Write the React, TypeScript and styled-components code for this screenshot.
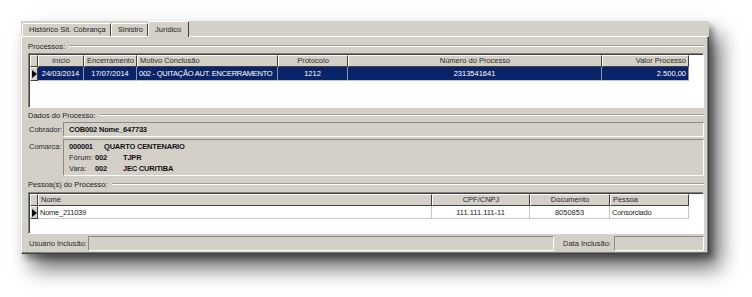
import React from 'react'
import styled, { createGlobalStyle } from 'styled-components'

const GlobalStyle = createGlobalStyle`
  html, body {
    margin: 0;
    background: #fff;
  }
  body {
    font-family: 'Liberation Sans', Arial, sans-serif;
    font-size: 7.5px;
    color: #1c1c1c;
  }
`

const Stage = styled.div`
  box-sizing: border-box;
  width: 752px;
  height: 297px;
  padding: 21px 0 0 21px;
  background: #fff;
  overflow: hidden;
`

const Window = styled.div`
  width: 688px;
  height: 233px;
  background: #d4d0c8;
  box-shadow: 4px 5px 6px rgba(0, 0, 0, 0.35), 11px 14px 20px rgba(0, 0, 0, 0.6);
  display: flex;
  flex-direction: column;
`

const TabStrip = styled.div`
  display: flex;
  align-items: flex-end;
  height: 15px;
  padding-left: 1px;
  flex-shrink: 0;
`

const Tab = styled.div<{ $w: number; $active?: boolean }>`
  box-sizing: border-box;
  width: ${({ $w }) => $w}px;
  height: ${({ $active }) => ($active ? 16 : 13)}px;
  margin-bottom: ${({ $active }) => ($active ? -1 : 0)}px;
  padding: ${({ $active }) => ($active ? '2px 0 0 6px' : '0 0 0 6px')};
  border-left: 1px solid #fff;
  border-top: 1px solid #fff;
  border-right: 1px solid #404040;
  border-radius: 2px 2px 0 0;
  background: #d4d0c8;
  line-height: 11px;
  white-space: nowrap;
  position: relative;
  z-index: 1;
`

const Page = styled.div`
  flex: 1;
  box-sizing: border-box;
  border-top: 1px solid #fff;
  border-left: 1px solid #fff;
  border-right: 1px solid #404040;
  border-bottom: 1px solid #404040;
  box-shadow: inset -1px -1px #808080;
  padding: 2px 4px 0 6px;
  display: flex;
  flex-direction: column;
`

const GroupTitle = styled.div<{ $h: number }>`
  height: ${({ $h }) => $h}px;
  display: flex;
  align-items: center;
  gap: 4px;
  flex-shrink: 0;

  &::after {
    content: '';
    flex: 1;
    border-top: 1px solid #a09c94;
    border-bottom: 1px solid #fff;
  }
`

const Grid = styled.div<{ $h: number }>`
  box-sizing: border-box;
  height: ${({ $h }) => $h}px;
  flex-shrink: 0;
  background: #fff;
  border: 1px solid;
  border-color: #808080 #fff #fff #808080;
  box-shadow: inset 1px 1px #404040;
  padding: 1px 0 0 1px;
`

const Row = styled.div<{ $h: number }>`
  display: flex;
  height: ${({ $h }) => $h}px;
`

const HeadCell = styled.div<{ $w: number; $align?: string }>`
  box-sizing: border-box;
  width: ${({ $w }) => $w}px;
  background: #d4d0c8;
  border-left: 1px solid #fff;
  border-top: 1px solid #fff;
  border-right: 1px solid #404040;
  border-bottom: 1px solid #404040;
  padding: 0 2px;
  text-align: ${({ $align }) => $align || 'center'};
  line-height: 10px;
  white-space: nowrap;
  overflow: hidden;
  color: #2a2a2a;
`

const Indicator = styled(HeadCell)`
  display: flex;
  align-items: center;
  padding: 0 0 0 1px;
`

const DataCell = styled.div<{ $w: number; $align?: string; $selected?: boolean }>`
  box-sizing: border-box;
  width: ${({ $w }) => $w}px;
  background: ${({ $selected }) => ($selected ? '#0a246a' : '#fff')};
  color: ${({ $selected }) => ($selected ? '#fff' : '#1c1c1c')};
  border-right: 1px solid ${({ $selected }) => ($selected ? '#8a93b4' : '#c8c8c8')};
  border-bottom: 1px solid #c8c8c8;
  padding: 0 2px;
  text-align: ${({ $align }) => $align || 'left'};
  line-height: 13px;
  white-space: nowrap;
  overflow: hidden;
  letter-spacing: ${({ $align }) => ($align === 'left' ? '-0.25px' : '0')};
`

const FieldRow = styled.div<{ $h: number; $mt?: number }>`
  display: flex;
  align-items: flex-start;
  height: ${({ $h }) => $h}px;
  margin-top: ${({ $mt }) => $mt || 0}px;
  flex-shrink: 0;
`

const Label = styled.div<{ $w: number; $ml?: number }>`
  width: ${({ $w }) => $w}px;
  margin-left: ${({ $ml }) => $ml || 0}px;
  padding-left: 1px;
  box-sizing: border-box;
  line-height: 15px;
  white-space: nowrap;
  color: #2a2a2a;
`

const FieldBox = styled.div<{ $w?: number }>`
  box-sizing: border-box;
  ${({ $w }) => ($w ? `width: ${$w}px;` : 'flex: 1;')}
  height: 100%;
  border: 1px solid;
  border-color: #8c8a84 #fff #fff #8c8a84;
  padding: 1px 5px;
  display: flex;
  flex-direction: column;
`

const Line = styled.div<{ $lh?: number }>`
  display: flex;
  line-height: ${({ $lh }) => $lh || 11}px;
  white-space: nowrap;
`

const Part = styled.span<{ $w?: number; $bold?: boolean }>`
  ${({ $w }) => ($w ? `width: ${$w}px;` : '')}
  flex-shrink: 0;
  font-weight: ${({ $bold }) => ($bold ? 700 : 400)};
  letter-spacing: ${({ $bold }) => ($bold ? '-0.2px' : '0')};
  color: ${({ $bold }) => ($bold ? '#111' : '#2a2a2a')};
`

const Arrow = () => (
  <svg width="5" height="8" viewBox="0 0 5 8">
    <polygon points="0,0 5,4 0,8" fill="#000" />
  </svg>
)

const procCols = [
  { title: 'Início', w: 46, align: 'center', value: '24/03/2014' },
  { title: 'Encerramento', w: 53, align: 'center', value: '17/07/2014' },
  { title: 'Motivo Conclusão', w: 141, align: 'left', value: '002 - QUITAÇÃO AUT. ENCERRAMENTO' },
  { title: 'Protocolo', w: 70, align: 'center', value: '1212' },
  { title: 'Número do Processo', w: 254, align: 'center', value: '2313541641' },
  { title: 'Valor Processo', w: 87, align: 'right', value: '2.500,00' },
]

const pessoaCols = [
  { title: 'Nome', w: 394, head: 'left', align: 'left', value: 'Nome_211039' },
  { title: 'CPF/CNPJ', w: 98, head: 'center', align: 'center', value: '111.111.111-11' },
  { title: 'Documento', w: 80, head: 'center', align: 'center', value: '8050853' },
  { title: 'Pessoa', w: 79, head: 'left', align: 'left', value: 'Consorciado' },
]

export default function App() {
  return (
    <>
      <GlobalStyle />
      <Stage>
        <Window>
          <TabStrip>
            <Tab $w={89}>Histórico Sit. Cobrança</Tab>
            <Tab $w={37}>Sinistro</Tab>
            <Tab $w={41} $active>
              Jurídico
            </Tab>
          </TabStrip>
          <Page>
            <GroupTitle $h={14}>Processos:</GroupTitle>
            <Grid $h={55}>
              <Row $h={12}>
                <HeadCell $w={8} />
                {procCols.map((c) => (
                  <HeadCell key={c.title} $w={c.w} $align={c.align}>
                    {c.title}
                  </HeadCell>
                ))}
              </Row>
              <Row $h={14}>
                <Indicator $w={8}>
                  <Arrow />
                </Indicator>
                {procCols.map((c) => (
                  <DataCell key={c.title} $w={c.w} $align={c.align} $selected>
                    {c.value}
                  </DataCell>
                ))}
              </Row>
            </Grid>

            <GroupTitle $h={14}>Dados do Processo:</GroupTitle>
            <FieldRow $h={15}>
              <Label $w={35}>Cobrador:</Label>
              <FieldBox>
                <Line $lh={12}>
                  <Part $w={30} $bold>
                    COB002
                  </Part>
                  <Part $bold>Nome_647733</Part>
                </Line>
              </FieldBox>
            </FieldRow>
            <FieldRow $h={37} $mt={2}>
              <Label $w={35}>Comarca:</Label>
              <FieldBox>
                <Line>
                  <Part $w={35} $bold>
                    000001
                  </Part>
                  <Part $bold>QUARTO CENTENARIO</Part>
                </Line>
                <Line>
                  <Part $w={26}>Fórum:</Part>
                  <Part $w={28} $bold>
                    002
                  </Part>
                  <Part $bold>TJPR</Part>
                </Line>
                <Line>
                  <Part $w={26}>Vara:</Part>
                  <Part $w={28} $bold>
                    002
                  </Part>
                  <Part $bold>JEC CURITIBA</Part>
                </Line>
              </FieldBox>
            </FieldRow>

            <GroupTitle $h={16}>Pessoa(s) do Processo:</GroupTitle>
            <Grid $h={42}>
              <Row $h={12}>
                <HeadCell $w={8} />
                {pessoaCols.map((c) => (
                  <HeadCell key={c.title} $w={c.w} $align={c.head}>
                    {c.title}
                  </HeadCell>
                ))}
              </Row>
              <Row $h={13}>
                <Indicator $w={8}>
                  <Arrow />
                </Indicator>
                {pessoaCols.map((c) => (
                  <DataCell key={c.title} $w={c.w} $align={c.align}>
                    {c.value}
                  </DataCell>
                ))}
              </Row>
            </Grid>

            <FieldRow $h={15} $mt={2}>
              <Label $w={60}>Usuário Inclusão:</Label>
              <FieldBox />
              <Label $w={52} $ml={8}>
                Data Inclusão:
              </Label>
              <FieldBox $w={90} />
            </FieldRow>
          </Page>
        </Window>
      </Stage>
    </>
  )
}
